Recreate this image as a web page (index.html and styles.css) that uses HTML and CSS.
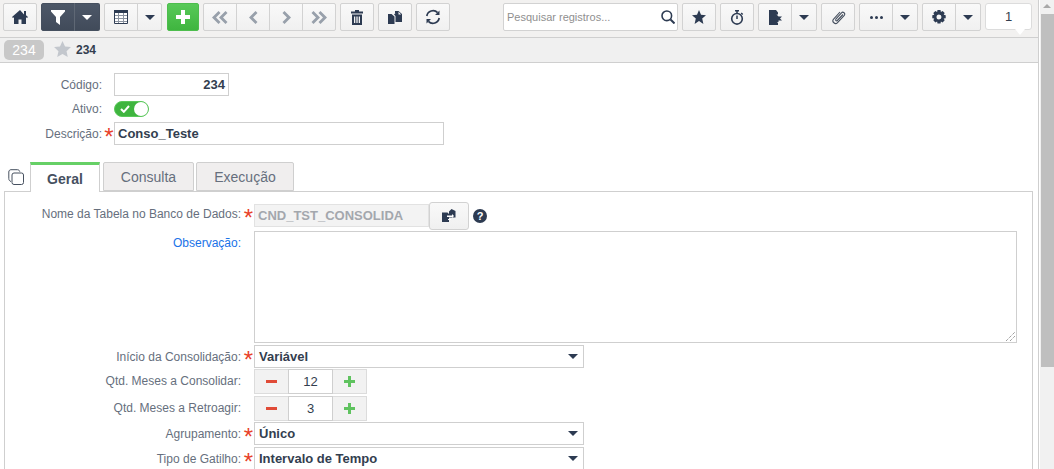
FILE: index.html
```html
<!DOCTYPE html>
<html lang="pt">
<head>
<meta charset="utf-8">
<title>Consolidação</title>
<link rel="stylesheet" href="styles.css">
</head>
<body>
<div class="app">
  <div class="page">
    <header class="toolbar">
      <button class="btn w34"><svg width="16" height="14" viewBox="0 0 16 14"><path class="fill" d="M8 0 0 7l1 1 1-.8V14h4.500V9.500h3V14H14V7.200l1 .8 1-1-2-1.800V1h-2v3.400z"/></svg></button>
      <div class="group dark ml4">
        <button class="btn"><svg width="14" height="15" viewBox="0 0 14 15"><path fill="#fff" d="M0 0h14v1.500L9 7v8L5 12V7L0 1.500z"/></svg></button>
        <button class="btn w26"><span class="caret white"></span></button>
      </div>
      <div class="group ml4">
        <button class="btn"><svg width="14" height="14" viewBox="0 0 14 14"><path fill="#fff" d="M0 0h14v14H0z"/><path fill="none" stroke="#8b93a0" d="M.5 5.500h13M.5 8.500h13M.5 11.500h13M4.500 3v11M9.500 3v11"/><path class="fill" d="M0 0h14v3H0z"/><path fill="none" stroke="#2d3b52" d="M.5.500h13v13H.5z"/></svg></button>
        <button class="btn w25"><span class="caret"></span></button>
      </div>
      <button class="btn add"><svg width="14" height="14" viewBox="0 0 14 14"><path fill="#fff" d="M5 0h4v5h5v4H9v5H5V9H0V5h5z"/></svg></button>
      <div class="group ml4">
        <button class="btn"><svg width="16" height="13" viewBox="0 0 16 13"><path class="muted" d="M6.500 0 8.500 2 4 6.500l4.500 4.500-2 2L0 6.500zM13.500 0l2 2L11 6.500l4.500 4.500-2 2L7 6.500z"/></svg></button>
        <button class="btn w34"><svg width="9" height="13" viewBox="0 0 9 13"><path class="muted" d="M6.500 0l2 2L4 6.500 8.500 11l-2 2L0 6.500z"/></svg></button>
        <button class="btn w34"><svg width="9" height="13" viewBox="0 0 9 13"><path class="muted" d="M2.500 0l-2 2L5 6.500.5 11l2 2L9 6.500z"/></svg></button>
        <button class="btn w34"><svg width="16" height="13" viewBox="0 0 16 13"><path class="muted" d="M2.500 0 .5 2 5 6.500.5 11l2 2L9 6.500zM9.500 0l-2 2L12 6.500 7.500 11l2 2L16 6.500z"/></svg></button>
      </div>
      <button class="btn w34 ml4"><svg width="12" height="15" viewBox="0 0 12 15"><path class="fill" fill-rule="evenodd" d="M4 0h4v1.500h4V3.500H0V1.500h4zM1 4.500h10V15H1zm2 2V13h1.300V6.500zm2.350 0V13h1.300V6.500zm2.350 0V13H9V6.500z"/></svg></button>
      <button class="btn w34 ml4"><svg width="14" height="13" viewBox="0 0 14 13"><path class="fill" d="M0 3h3.500L6.500 5.500V13H0zM7.500 2h-.5V0h3.500L14 3v8H7.500V5L6 3.500z"/><path fill="#f4f4f4" d="M10.500.800v2.700h2.700z"/></svg></button>
      <button class="btn w34 ml4"><svg width="16" height="16" viewBox="0 0 16 16"><path class="stroke" fill="none" stroke-width="1.700" d="M1.800 7a6.300 6.300 0 0 1 10.800-3.300M14.200 9a6.300 6.300 0 0 1-10.800 3.300"/><path class="fill" d="M14.500 1.500v4.500h-4.500zM1.500 14.500v-4.500h4.500z"/></svg></button>
      <div class="search">
        <span class="search-text">Pesquisar registros...</span>
        <svg width="14" height="14" viewBox="0 0 14 14"><circle class="stroke" cx="5.800" cy="5.800" r="4.800" fill="none" stroke-width="1.600"/><path class="stroke" stroke-width="2" d="M9.500 9.500 13.500 13.500"/></svg>
      </div>
      <button class="btn w34 ml4"><svg width="14" height="14" viewBox="0 0 14 14"><path class="fill" d="M7 0l2 4.800 5 .4-3.800 3.300L11.400 14 7 11 2.600 14l1.200-5.500L0 5.200l5-.4z"/></svg></button>
      <button class="btn w34 ml4"><svg width="15" height="15" viewBox="0 0 15 15"><circle class="stroke" cx="7" cy="8.800" r="5.300" fill="none" stroke-width="1.600"/><path class="stroke" stroke-width="1.500" d="M7 9V5.500M5 .8h4M7 1v2M11.200 3l1.500 1.500"/></svg></button>
      <div class="group ml4">
        <button class="btn"><svg width="13" height="15" viewBox="0 0 13 15"><path class="fill" d="M0 0h7l2 2.500v2H7.500l2 2H13L11 8.500 13 10.500H9.500V12H8l1 1v2H0z"/></svg></button>
        <button class="btn w26"><span class="caret"></span></button>
      </div>
      <button class="btn w34 ml4"><svg width="15" height="15" viewBox="0 0 15 15"><path fill="none" stroke="#46505f" stroke-width="1.100" d="M4.800 9.200 10.500 2.800c1.500-1.600 4.200.6 2.800 2.500L6.300 12.800c-2 2.100-5.800-1-3.900-3.400L9 2"/><path fill="none" stroke="#46505f" stroke-width="1.100" d="M4.800 9.200c-.7 1 .6 2.200 1.500 1.300L12 4.500"/></svg></button>
      <div class="group ml4">
        <button class="btn"><svg width="13" height="3" viewBox="0 0 13 3"><circle class="fill" cx="1.500" cy="1.500" r="1.500"/><circle class="fill" cx="6.500" cy="1.500" r="1.500"/><circle class="fill" cx="11.500" cy="1.500" r="1.500"/></svg></button>
        <button class="btn w26"><span class="caret"></span></button>
      </div>
      <div class="group ml4">
        <button class="btn"><svg width="14" height="14" viewBox="0 0 14 14"><path class="fill" fill-rule="evenodd" d="M5.500 0h3l.4 2 1.700-1 2.100 2.100-1 1.700 2 .4v3l-2 .4 1 1.700-2.100 2.100-1.700-1-.4 2h-3l-.4-2-1.700 1-2.100-2.100 1-1.700-2-.4v-3l2-.4-1-1.700L3.400 1l1.700 1zM7 4.500a2.500 2.500 0 1 0 0 5 2.500 2.500 0 0 0 0-5z"/></svg></button>
        <button class="btn w26"><span class="caret"></span></button>
      </div>
      <div class="pager">1</div>
    </header>
    <div class="crumb">
      <span class="badge">234</span>
      <svg class="crumb-star" width="17" height="16" viewBox="0 0 18 17"><path fill="#c3c7cd" d="M9 0l2.700 5.800 6.300.7-4.700 4.300L14.600 17 9 13.800 3.400 17l1.300-6.200L0 6.500l6.300-.7z"/></svg>
      <span class="crumb-text">234</span>
    </div>
    <section class="head-form">
      <div class="row r-code"><label class="lbl">Código:</label><span class="ast"></span><div class="input num">234</div></div>
      <div class="row r-active"><label class="lbl">Ativo:</label><span class="ast"></span>
        <div class="toggle"><svg width="10" height="8" viewBox="0 0 10 8"><path fill="none" stroke="#fff" stroke-width="2" d="M1 4l2.800 2.800L9 1"/></svg><span class="knob"></span></div>
      </div>
      <div class="row r-desc"><label class="lbl">Descrição:</label><span class="ast">*</span><div class="input wide">Conso_Teste</div></div>
    </section>
    <nav class="tabs">
      <svg class="tab-icon" width="16" height="16" viewBox="0 0 16 16"><rect x="4" y="4" width="11.500" height="11.500" rx="2" fill="#fff" stroke="#46505f"/><path fill="none" stroke="#46505f" d="M3 12.500C1.500 12 .8 11 .8 9.500V3C.8 1.500 1.800.7 3 .7h6.500c1.200 0 2 .8 2.300 2"/></svg>
      <div class="tab active">Geral</div>
      <div class="tab t-cons">Consulta</div>
      <div class="tab t-exec">Execução</div>
    </nav>
    <section class="panel">
      <div class="frow f-table"><label class="lbl">Nome da Tabela no Banco de Dados:</label><span class="ast">*</span>
        <div class="input disabled">CND_TST_CONSOLIDA</div>
        <button class="btn lookup"><svg width="14" height="13" viewBox="0 0 14 13"><path class="fill" d="M0 3.500h5.500L7 5v8H0zM7 2.500 9.500 0 13.500 2v6.500H7z"/><path fill="#fff" d="M5 6.500h5V5l2 2-2 2V8H5zM6 10h3v1H6z"/></svg></button>
        <svg class="help" width="14" height="14" viewBox="0 0 14 14"><circle class="fill" cx="7" cy="7" r="7"/><text x="7" y="11" class="help-q">?</text></svg>
      </div>
      <div class="frow f-obs"><label class="lbl link">Observação:</label><span class="ast"></span><div class="textarea"><svg class="grip" width="9" height="9" viewBox="0 0 9 9"><path stroke="#777" fill="none" stroke-dasharray="1 1" d="M0 9 9 0M4 9 9 4"/></svg></div></div>
      <div class="frow f-sel"><label class="lbl">Início da Consolidação:</label><span class="ast">*</span><div class="select">Variável<span class="caret"></span></div></div>
      <div class="frow f-step s-first"><label class="lbl">Qtd. Meses a Consolidar:</label><span class="ast"></span>
        <div class="stepper"><button class="step"><span class="minus"></span></button><div class="step-val">12</div><button class="step"><svg width="11" height="11" viewBox="0 0 11 11"><path fill="#5fc35f" d="M4 0h3v4h4v3H7v4H4V7H0V4h4z"/></svg></button></div>
      </div>
      <div class="frow f-step"><label class="lbl">Qtd. Meses a Retroagir:</label><span class="ast"></span>
        <div class="stepper"><button class="step"><span class="minus"></span></button><div class="step-val">3</div><button class="step"><svg width="11" height="11" viewBox="0 0 11 11"><path fill="#5fc35f" d="M4 0h3v4h4v3H7v4H4V7H0V4h4z"/></svg></button></div>
      </div>
      <div class="frow f-sel s-group"><label class="lbl">Agrupamento:</label><span class="ast">*</span><div class="select">Único<span class="caret"></span></div></div>
      <div class="frow f-sel s-trig"><label class="lbl">Tipo de Gatilho:</label><span class="ast">*</span><div class="select">Intervalo de Tempo<span class="caret"></span></div></div>
    </section>
  </div>
  <div class="scrollbar"><span class="arrow"></span><span class="thumb"></span></div>
</div>
</body>
</html>
```

FILE: styles.css
```css
* { box-sizing: border-box; }
html, body { margin: 0; height: 100%; overflow: hidden; }
body { background: #fff; font-family: "Liberation Sans", Arial, sans-serif; color: #333e4f; font-size: 12px; }
button { font-family: inherit; padding: 0; margin: 0; }
.app { display: flex; height: 469px; overflow: hidden; }
.page { width: 1039px; flex: none; border-right: 1px solid #cfcfcf; overflow: hidden; }
.fill { fill: #2d3b52; }
.stroke { stroke: #2d3b52; }
.muted { fill: #98a0ab; }

.toolbar { height: 38px; display: flex; align-items: flex-start; padding: 3px 0 0 3px; border-bottom: 1px solid #cfcfcf; background: #f2f1f0; position: relative; }
.ml4 { margin-left: 4px; }
.btn { width: 34px; height: 28px; display: flex; align-items: center; justify-content: center; background: linear-gradient(#f9f9f9, #f0f0f0); border: 1px solid #d2d2d2; border-radius: 2px; flex: none; }
.w34 { width: 34px; }
.w26 { width: 26px; }
.w25 { width: 25px; }
.group { display: flex; flex: none; }
.group .btn { border-radius: 0; margin-left: -1px; }
.group .btn:first-child { margin-left: 0; border-radius: 2px 0 0 2px; }
.group .btn:last-child { border-radius: 0 2px 2px 0; }
.dark .btn { background: linear-gradient(#4d5868, #414b5a); border-color: #46505f; }
.dark .btn + .btn { border-left-color: #5f6875; }
.add { width: 32px; margin-left: 5px; background: linear-gradient(#58c958, #3fb53f); border-color: #4dbd4d; }
.caret { display: inline-block; width: 0; height: 0; border-left: 5px solid transparent; border-right: 5px solid transparent; border-top: 5px solid #2d3b52; }
.caret.white { border-top-color: #fff; }
.search { width: 175px; height: 28px; margin-left: 53px; background: #fff; border: 1px solid #d2d2d2; border-radius: 2px; display: flex; align-items: center; justify-content: space-between; padding: 0 2px 0 3px; }
.search-text { color: #8f8f8f; font-size: 11px; }
.pager { width: 47px; height: 27px; margin-left: 4px; background: #fff; border: 1px solid #dcdcdc; border-radius: 3px; display: flex; align-items: center; justify-content: center; font-size: 13px; position: relative; z-index: 1; }
.pager::after { content: ""; position: absolute; left: 29px; bottom: -6px; width: 0; height: 0; border-left: 5px solid transparent; border-right: 5px solid transparent; border-top: 6px solid #fff; }

.crumb { height: 25px; display: flex; align-items: center; padding-left: 4px; background: #f0f0f0; border-bottom: 1px solid #cfcfcf; }
.badge { width: 40px; height: 20px; background: #c8c8c8; color: #fff; font-size: 14px; border-radius: 5px; display: flex; align-items: center; justify-content: center; }
.crumb-star { margin-left: 10px; margin-bottom: 2px; }
.crumb-text { margin-left: 5px; font-size: 12px; font-weight: 700; color: #333e4f; }

.head-form { padding-top: 10px; }
.row { display: flex; align-items: center; }
.r-code { height: 23px; }
.r-active { height: 24px; margin-top: 1px; }
.r-desc { height: 23px; margin-top: 1px; }
.lbl { color: #666f7d; font-size: 12px; text-align: right; flex: none; }
.row .lbl { width: 102px; }
.ast { color: #e8412a; width: 12px; flex: none; font-size: 24px; line-height: 20px; height: 13px; padding-left: 2px; text-align: center; }
.input { height: 23px; background: #fff; border: 1px solid #cfcfcf; display: flex; align-items: center; font-weight: 700; font-size: 13px; padding: 0 3px; color: #333e4f; }
.num { width: 115px; justify-content: flex-end; }
.wide { width: 330px; }
.toggle { width: 35px; height: 16px; border-radius: 8px; background: #3fb53f; border: 1px solid #5ac85a; display: flex; align-items: center; justify-content: space-between; padding-left: 5px; }
.knob { width: 14px; height: 14px; border-radius: 50%; background: #fff; }

.tabs { display: flex; align-items: flex-end; height: 30px; margin-top: 16px; padding-left: 5px; position: relative; z-index: 1; }
.tab-icon { align-self: flex-start; margin: 8px 0 0 3px; flex: none; }
.tab { width: 91px; height: 29px; margin-left: 2px; display: flex; align-items: center; justify-content: center; background: #f0eeee; border: 1px solid #cfcfcf; border-radius: 2px 2px 0 0; font-size: 14px; color: #666f7d; }
.tab.active { width: 70px; height: 30px; margin-left: 6px; margin-bottom: -1px; background: #fff; border-top: 3px solid #66d066; border-bottom: none; font-weight: 700; color: #46505f; border-radius: 0; }
.t-cons { margin-left: 3px; }
.t-exec { width: 98px; }
.panel { width: 1029px; margin-left: 4px; height: 300px; border: 1px solid #cfcfcf; padding-top: 12px; }
.frow { display: flex; align-items: center; }
.frow .lbl { width: 236px; }
.frow .ast { width: 13px; }
.f-table { height: 23px; }
.f-table .lbl { padding-bottom: 3px; }
.f-table .ast { margin-top: -3px; }
.f-table .input { width: 175px; height: 23px; background: #f3f3f3; border-color: #e2e2e2; color: #a3a7ad; }
.lookup { width: 40px; height: 28px; border-radius: 3px; }
.help { margin-left: 4px; }
.help-q { fill: #fff; font: 700 11px "Liberation Sans", Arial, sans-serif; text-anchor: middle; }
.link { color: #1a73e8; }
.f-obs { align-items: flex-start; margin-top: 4px; height: 114px; }
.f-obs .lbl { padding-top: 5px; }
.textarea { width: 763px; height: 112px; border: 1px solid #cfcfcf; background: #fff; position: relative; }
.grip { position: absolute; right: 1px; bottom: 1px; }
.f-sel { height: 23px; }
.s-group { margin-top: 1px; }
.s-trig { margin-top: 2px; }
.select { width: 330px; height: 23px; border: 1px solid #cfcfcf; background: #fff; display: flex; align-items: center; justify-content: space-between; font-weight: 700; font-size: 13px; padding: 0 5px 0 4px; color: #333e4f; }
.f-step { height: 25px; margin-top: 2px; }
.s-first { margin-top: 1px; }
.f-step .lbl { padding-bottom: 2px; }
.stepper { display: flex; height: 25px; }
.step { width: 35px; height: 25px; background: #f2f2f2; border: 1px solid #dcdcdc; display: flex; align-items: center; justify-content: center; }
.step-val { width: 45px; height: 25px; background: #fff; border: 1px solid #cfcfcf; margin: 0 -1px; display: flex; align-items: center; justify-content: center; font-size: 13px; position: relative; }
.minus { width: 11px; height: 3px; background: #e04b37; }

.scrollbar { flex: none; width: 15px; background: #f1f1f1; position: relative; border-left: 1px solid #fff; }
.arrow { display: block; width: 0; height: 0; margin: 4px 0 0 3px; border-left: 4px solid transparent; border-right: 4px solid transparent; border-bottom: 4px solid #a8a8a8; }
.thumb { display: block; position: absolute; left: 1px; right: 0; top: 14px; height: 353px; background: #bfbfbf; }
```
